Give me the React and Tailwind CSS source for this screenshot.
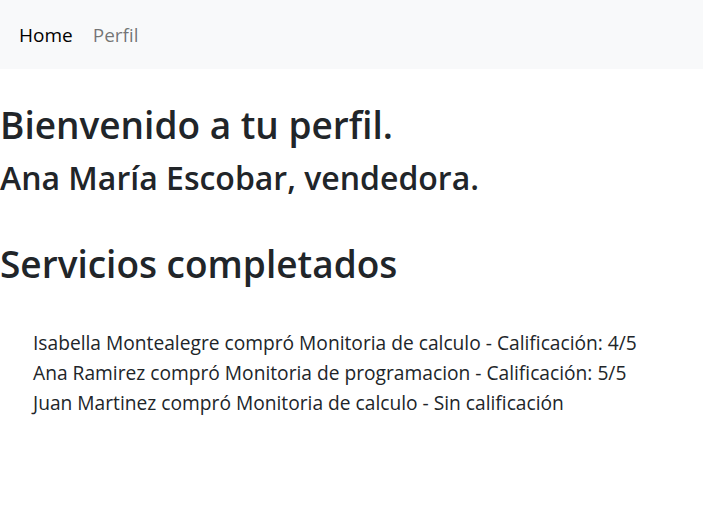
export default function App() {
  const font = { fontFamily: '"Open Sans", sans-serif' };
  return (
    <div className="min-h-[512px] bg-white text-[#212529]" style={font}>
      <nav className="h-[69px] bg-[#f8f9fa] flex items-center pl-[19px] gap-[20px] text-[19px] leading-[26px]">
        <a className="text-black">Home</a>
        <a className="text-[rgba(0,0,0,0.55)]">Perfil</a>
      </nav>
      <h1 className="mt-[34px] text-[37px] leading-[44px] font-semibold">Bienvenido a tu perfil.</h1>
      <h2 className="mt-[12px] text-[32px] leading-[38px] font-semibold">Ana María Escobar, vendedora.</h2>
      <h1 className="mt-[45px] text-[37px] leading-[44px] font-semibold">Servicios completados</h1>
      <ul className="mt-[42px] pl-[33px] text-[19.2px] leading-[30px]">
        <li>Isabella Montealegre compró Monitoria de calculo - Calificación: 4/5</li>
        <li>Ana Ramirez compró Monitoria de programacion - Calificación: 5/5</li>
        <li>Juan Martinez compró Monitoria de calculo - Sin calificación</li>
      </ul>
    </div>
  );
}
